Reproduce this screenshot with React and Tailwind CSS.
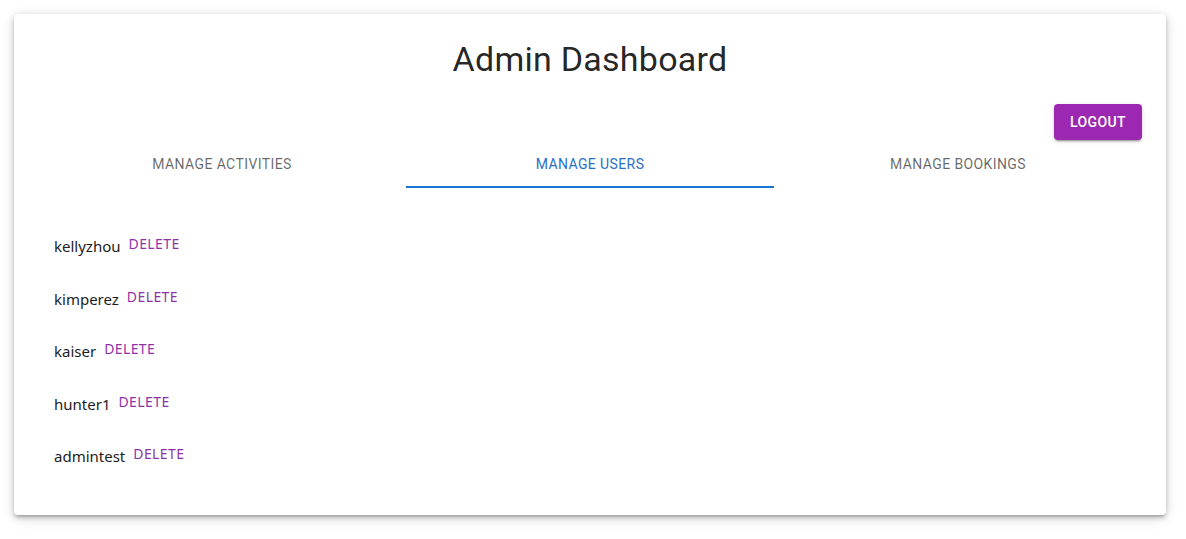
import React, { useState } from 'react';

const users = ['kellyzhou', 'kimperez', 'kaiser', 'hunter1', 'admintest'];
const tabs = ['Manage Activities', 'Manage Users', 'Manage Bookings'];

export default function App() {
  const [tab, setTab] = useState(1);

  return (
    <div className="min-h-screen bg-white pt-[14px] pl-[14px] pr-[20px] font-['Roboto',sans-serif]">
      <div className="rounded bg-white px-6 pt-6 shadow-[0_3px_3px_-2px_rgba(0,0,0,0.2),0_3px_4px_0_rgba(0,0,0,0.14),0_1px_8px_0_rgba(0,0,0,0.12),0_4px_14px_0_rgba(0,0,0,0.1)]">
        <h1 className="text-center text-[34px] font-normal leading-[42px] tracking-[0.25px] text-[rgba(0,0,0,0.87)]">
          Admin Dashboard
        </h1>

        <div className="mt-6 flex justify-end">
          <button className="h-9 rounded bg-[#9c27b0] px-4 text-sm font-medium uppercase tracking-[0.4px] text-white shadow-[0_3px_1px_-2px_rgba(0,0,0,0.2),0_2px_2px_0_rgba(0,0,0,0.14),0_1px_5px_0_rgba(0,0,0,0.12)] hover:bg-[#7b1fa2]">
            Logout
          </button>
        </div>

        <div className="grid grid-cols-3">
          {tabs.map((t, i) => (
            <button
              key={t}
              onClick={() => setTab(i)}
              className={
                i === tab
                  ? 'relative h-12 text-sm uppercase tracking-[0.4px] text-[#2a6fc4] after:absolute after:bottom-0 after:left-0 after:h-[2px] after:w-full after:bg-[#1976d2]'
                  : 'h-12 text-sm uppercase tracking-[0.4px] text-[rgba(0,0,0,0.6)]'
              }
            >
              {t}
            </button>
          ))}
        </div>

        <div className="py-6">
          <ul className="py-2">
            {users.map((u) => (
              <li key={u} className="flex items-center px-4 py-2 font-['Noto_Sans',sans-serif]">
                <span className="text-[15px] leading-6 text-[#1c1c1c]">{u}</span>
                <button className="h-[36.5px] px-2 pb-1 text-sm uppercase tracking-[0.4px] text-[#8f32a8]">
                  Delete
                </button>
              </li>
            ))}
          </ul>
        </div>
      </div>
    </div>
  );
}
